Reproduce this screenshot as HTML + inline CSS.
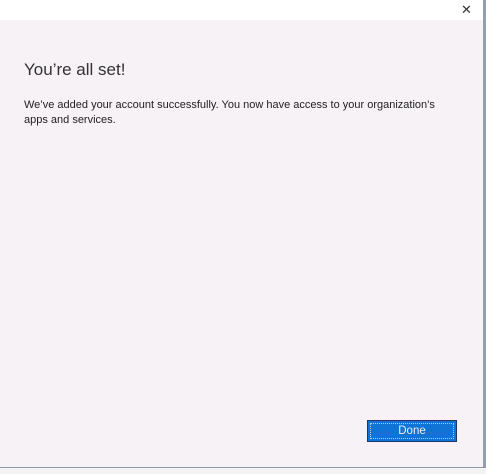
<!DOCTYPE html>
<html><head><style>
html,body{margin:0;padding:0;width:486px;height:473px;overflow:hidden;background:#fff;font-family:"Liberation Sans",sans-serif;}
.top{position:absolute;left:0;top:0;width:483px;height:20px;background:#fff;}
.x{position:absolute;left:461px;top:2px;font-size:13px;color:#333;}
.main{position:absolute;left:0;top:20px;width:483px;height:447px;background:#f6f2f5;}
.rb{position:absolute;left:483px;top:0;width:3px;height:473px;background:#8f9fb5;}
.bb{position:absolute;left:0;top:467px;width:486px;height:6px;background:#f3f3f3;border-top:1px solid #8a99ae;}
h1{position:absolute;left:24px;top:60px;margin:0;font-weight:normal;font-size:17px;color:#333;}
p{position:absolute;left:24px;top:98px;margin:0;font-size:11px;line-height:15px;color:#222;width:420px;}
.btn{position:absolute;left:367px;top:420px;width:88px;height:20px;background:#0f74d6;border:1px solid #1a3a6a;color:#e8f0ff;font-size:11.5px;text-align:center;line-height:20px;}
.btn span{position:absolute;left:2px;top:2px;right:2px;bottom:2px;border:1px dotted #bcd;}
</style></head><body>
<div class="top"></div><div class="x">✕</div>
<div class="main"></div>
<div class="rb"></div><div class="bb"></div>
<h1>You’re all set!</h1>
<p>We’ve added your account successfully. You now have access to your organization’s apps and services.</p>
<div class="btn"><span></span>Done</div>
</body></html>
